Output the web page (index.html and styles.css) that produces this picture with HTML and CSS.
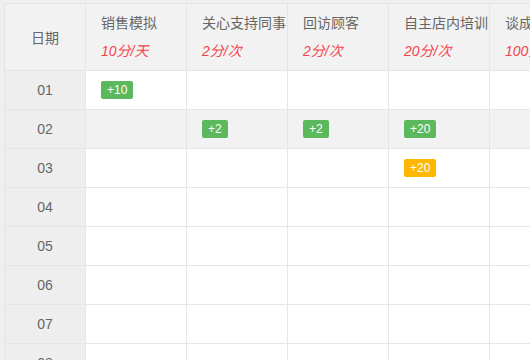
FILE: index.html
```html
<!DOCTYPE html>
<html lang="zh-CN">
<head>
<meta charset="utf-8">
<title>积分表</title>
<link rel="stylesheet" href="styles.css">
</head>
<body>
<div class="sheet">
  <div class="cell head date">日期</div>
  <div class="cell head"><div class="title">销售模拟</div><div class="rate">10分/天</div></div>
  <div class="cell head"><div class="title">关心支持同事</div><div class="rate">2分/次</div></div>
  <div class="cell head"><div class="title">回访顾客</div><div class="rate">2分/次</div></div>
  <div class="cell head"><div class="title">自主店内培训</div><div class="rate">20分/次</div></div>
  <div class="cell head"><div class="title">谈成订单</div><div class="rate">100分/次</div></div>
  <div class="cell head"><div class="title">其他</div><div class="rate">5分/次</div></div>

  <div class="cell day">01</div>
  <div class="cell"><span class="badge green">+10</span></div>
  <div class="cell"></div><div class="cell"></div><div class="cell"></div><div class="cell"></div><div class="cell"></div>

  <div class="cell day">02</div>
  <div class="cell hl"></div>
  <div class="cell hl"><span class="badge green">+2</span></div>
  <div class="cell hl"><span class="badge green">+2</span></div>
  <div class="cell hl"><span class="badge green">+20</span></div>
  <div class="cell hl"></div><div class="cell hl"></div>

  <div class="cell day">03</div>
  <div class="cell"></div><div class="cell"></div><div class="cell"></div>
  <div class="cell"><span class="badge orange">+20</span></div>
  <div class="cell"></div><div class="cell"></div>

  <div class="cell day">04</div>
  <div class="cell"></div><div class="cell"></div><div class="cell"></div><div class="cell"></div><div class="cell"></div><div class="cell"></div>
  <div class="cell day">05</div>
  <div class="cell"></div><div class="cell"></div><div class="cell"></div><div class="cell"></div><div class="cell"></div><div class="cell"></div>
  <div class="cell day">06</div>
  <div class="cell"></div><div class="cell"></div><div class="cell"></div><div class="cell"></div><div class="cell"></div><div class="cell"></div>
  <div class="cell day">07</div>
  <div class="cell"></div><div class="cell"></div><div class="cell"></div><div class="cell"></div><div class="cell"></div><div class="cell"></div>
  <div class="cell day">08</div>
  <div class="cell"></div><div class="cell"></div><div class="cell"></div><div class="cell"></div><div class="cell"></div><div class="cell"></div>
</div>
</body>
</html>
```

FILE: styles.css
```css
html, body {
  margin: 0;
  padding: 0;
  overflow: hidden;
  background: #efefef;
}
body {
  padding: 3px 0 0 4px;
  font-family: "Liberation Sans", "Noto Sans CJK SC", sans-serif;
  font-size: 14px;
  color: #666;
}
.sheet {
  display: grid;
  grid-template-columns: 81px repeat(6, 101px);
  grid-auto-rows: 39px;
  grid-template-rows: 67px;
  width: max-content;
  border-top: 1px solid #e4e4e4;
  border-left: 1px solid #e4e4e4;
  background: #fff;
}
.cell {
  box-sizing: border-box;
  border-right: 1px solid #e6e6e6;
  border-bottom: 1px solid #e6e6e6;
  padding: 0 15px;
  display: flex;
  align-items: center;
  background: #fff;
}
.cell.hl {
  background: #f2f2f2;
}
.head {
  background: #f2f2f2;
  flex-direction: column;
  align-items: flex-start;
  justify-content: flex-start;
  padding-top: 8px;
  white-space: nowrap;
  overflow: hidden;
}
.head.date {
  align-items: center;
  justify-content: center;
  padding: 0;
}
.title {
  line-height: 20px;
  font-family: "Noto Sans CJK SC", sans-serif;
  font-size: 14px;
}
.rate {
  margin-top: 9px;
  line-height: 20px;
  color: #f5434a;
  font-style: italic;
  font-size: 14px;
}
.day {
  background: #eeeeee;
  justify-content: center;
  padding: 0;
}
.badge {
  display: inline-block;
  height: 18px;
  line-height: 18px;
  padding: 0 6px;
  border-radius: 2px;
  color: #fff;
  font-size: 12px;
}
.green {
  background: #5cb85c;
}
.orange {
  background: #ffb800;
}
```
